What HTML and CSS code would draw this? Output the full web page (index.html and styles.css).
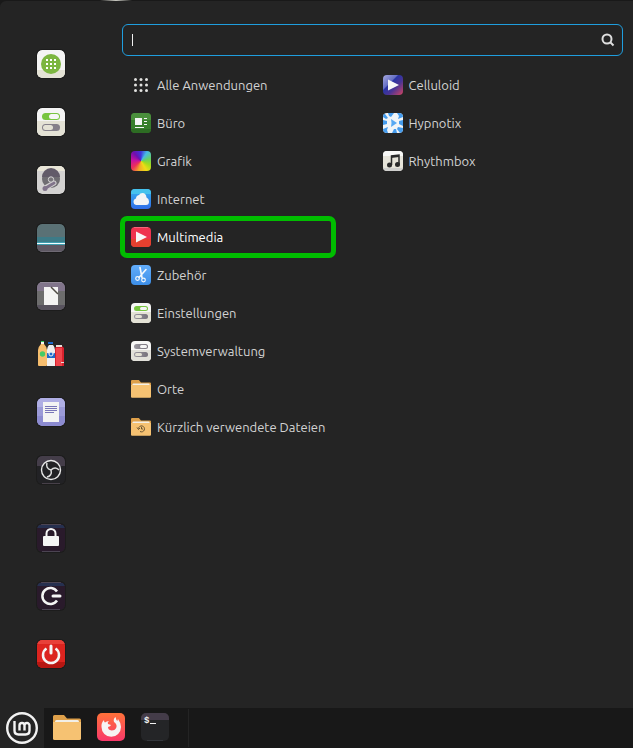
FILE: index.html
```html
<!DOCTYPE html>
<html lang="de">
<head>
<meta charset="utf-8">
<title>Anwendungsmenü</title>
<link rel="stylesheet" href="styles.css">
</head>
<body>
<svg class="defs" aria-hidden="true">
  <defs>
    <linearGradient id="g-fox" x2="0" y2="1"><stop offset="0" stop-color="#ff7139"/><stop offset="1" stop-color="#f9396b"/></linearGradient>
    <linearGradient id="g-cell" x2="1" y2="1"><stop offset="0" stop-color="#a6a9e0"/><stop offset=".35" stop-color="#6670c4"/><stop offset=".4" stop-color="#2a35a4"/><stop offset=".62" stop-color="#4a3495"/><stop offset="1" stop-color="#d34560"/></linearGradient>
    <linearGradient id="g-sky" x2="0" y2="1"><stop offset="0" stop-color="#35b2ee"/><stop offset="1" stop-color="#2f6de8"/></linearGradient>
    <linearGradient id="g-acc" x2="0" y2="1"><stop offset="0" stop-color="#62adfb"/><stop offset="1" stop-color="#3c8ee8"/></linearGradient>
    <linearGradient id="g-knob"><stop offset="0" stop-color="#9b98a0"/><stop offset="1" stop-color="#77727c"/></linearGradient>
    <clipPath id="c-28"><rect width="28" height="28" rx="5"/></clipPath>
    <clipPath id="c-20"><rect width="20" height="20" rx="4"/></clipPath>
    <symbol id="folder" viewBox="0 0 28 26">
      <path d="M0 2.500Q0 1 1.500 1H11l3 3.500h12.500Q28 4.500 28 6v5H0z" fill="#dea04a"/>
      <path d="M2 7.500Q2 6 3.500 6h21Q26 6 26 7.500V10H2z" fill="#f2efe6"/>
      <path d="M0 8h28v16.500q0 1.500-1.500 1.500h-25Q0 26 0 24.500z" fill="#f6c272"/>
    </symbol>
  </defs>
</svg>

<main class="menu">
  <nav class="favorites" aria-label="Favoriten">
    <div class="stack">
      <button class="fav" aria-label="Anwendungsverwaltung"><svg viewBox="0 0 28 28"><g clip-path="url(#c-28)"><path fill="#f4f4f4" d="M0 0h28v28H0z"/><path fill="#e4e2d5" d="M0 20h28v8H0z"/></g><circle cx="14" cy="14" r="10" fill="#7cb640"/><g fill="#fff"><path d="M9 9h2v2H9zm4 0h2v2h-2zm4 0h2v2h-2zM9 13h2v2H9zm4 0h2v2h-2zm4 0h2v2h-2zM9 17h2v2H9zm4 0h2v2h-2zm4 0h2v2h-2z"/></g></svg></button>
      <button class="fav" aria-label="Systemeinstellungen"><svg viewBox="0 0 28 28"><g clip-path="url(#c-28)"><path fill="#f4f4f4" d="M0 0h28v28H0z"/><path fill="#e4e2d5" d="M0 13h28v15H0z"/></g><rect x="5" y="5" width="18" height="7" rx="3.500" fill="#78c540"/><rect x="12" y="6" width="10" height="5" rx="2.500" fill="#f6f6f6"/><rect x="5" y="16" width="18" height="7" rx="3.500" fill="#85808a"/><rect x="6" y="17" width="10" height="5" rx="2.500" fill="#e4e2d5"/></svg></button>
      <button class="fav" aria-label="Laufwerke"><svg viewBox="0 0 28 28"><g clip-path="url(#c-28)"><path fill="#d3d2d1" d="M0 0h28v28H0z"/><path fill="#e9e6d8" d="M0 0h28v5H0z"/></g><circle cx="14" cy="13" r="9" fill="#6f6d72"/><path d="M5 11a9 9 0 0 1 18 0z" fill="#625b69"/><path d="M17 17L9 21.500" stroke="#d3d2d1" stroke-width="5" stroke-linecap="round"/><path d="M17 17L8 22.500" stroke="#81748b" stroke-width="3" stroke-linecap="round"/><circle cx="8" cy="22.500" r="2.500" fill="#81748b"/><circle cx="14" cy="13.500" r="2.700" fill="#77757a" stroke="#d5d3d5"/></svg></button>
      <button class="fav" aria-label="Dokumentenscanner"><svg viewBox="0 0 28 28"><g clip-path="url(#c-28)"><path fill="#5a7175" d="M0 0h28v28H0z"/><path fill="#3d7b87" d="M0 13h28v6H0z"/><path fill="#5e5863" d="M0 20h28v8H0z"/><path fill="#3f9fb0" d="M0 18h28v3H0z"/><path fill="#f3fdff" d="M0 19h28v1H0z"/><path fill="#6f6a74" d="M0 27h28v1H0z"/></g></svg></button>
      <button class="fav" aria-label="LibreOffice"><svg viewBox="0 0 28 28"><g clip-path="url(#c-28)"><path fill="#6d6d6d" d="M0 0h28v28H0z"/><path fill="#81758b" d="M0 0h28v9H0z"/><path fill="#58535e" d="M0 23h28v5H0z"/><path fill="#938b9a" d="M0 0h28v1H0z"/></g><path fill="#f4f4f3" d="M7 5h14v18H7z"/><path d="M14 5l7 7" stroke="#514d46" stroke-width="1.500"/></svg></button>
      <button class="fav" aria-label="Zeichnen"><svg viewBox="0 0 28 28"><path fill="#f6bd6d" d="M1 10Q1 7 4 4h3q3 3 3 6v15q0 1-1 1H2q-1 0-1-1z"/><path fill="#f6f5f0" d="M4 2h3v2H4z"/><path fill="#31c95b" d="M4 1h3v1H4z"/><circle cx="5.500" cy="14" r="2.700" fill="#45cb66"/><path fill="#efeff0" d="M10 10q0-3 2-5h4q2 2 2 5v16h-8z"/><path fill="#1d69cc" d="M11 2h5v2h-5zM10 13l4 1 4-1v5h-8z"/><circle cx="14" cy="14" r="2" fill="#1d69cc" stroke="#f3f3f3"/><path fill="#d8212d" d="M18 8l2-2h5l2 2v18h-9z"/><path fill="#ef454c" d="M19 8h6v18h-6z"/><path fill="#e8ddd9" d="M19 5h6v2h-6zM24 22h3v1h-3z"/></svg></button>
      <button class="fav" aria-label="Texteditor"><svg viewBox="0 0 28 28"><g clip-path="url(#c-28)"><path fill="#9b9ad7" d="M0 0h28v28H0z"/><path fill="#afaee4" d="M0 0h28v9H0z"/><path fill="#8c8bd0" d="M0 18h28v10H0z"/></g><path fill="#f3f3f3" d="M6 4h16v20H6z"/><path d="M8 8.500h12M8 10.500h12M8 12.500h12M8 14.500h9" stroke="#7976b8"/></svg></button>
      <button class="fav" aria-label="OBS Studio"><svg viewBox="0 0 28 28"><g clip-path="url(#c-28)"><path fill="#222225" d="M0 0h28v28H0z"/><path fill="#443d49" d="M0 0h28v10H0z"/><path fill="#474049" d="M5 27h18v1H5z"/></g><circle cx="14" cy="14" r="9.500" fill="#222225" stroke="#e8e8e8" stroke-width="1.400"/><g fill="none" stroke="#dedede" stroke-width="1.500"><path d="M14 14C10 13 9 10 10 7"/><path d="M14 14C10 13 9 10 10 7" transform="rotate(120 14 14)"/><path d="M14 14C10 13 9 10 10 7" transform="rotate(240 14 14)"/></g></svg></button>
    </div>
    <div class="stack">
      <button class="fav" aria-label="Bildschirm sperren"><svg viewBox="0 0 28 28"><g clip-path="url(#c-28)"><path fill="#291a2b" d="M0 0h28v28H0z"/><path fill="#26304f" d="M0 1h28v3H0z"/><path fill="#4b4452" d="M4 0h20v1H4zM5 27h18v1H5z"/></g><path d="M9.500 13V9.500a4.500 4.500 0 0 1 9 0V13" fill="none" stroke="#f5f5f5" stroke-width="2"/><rect x="6" y="12" width="16" height="10" rx="1" fill="#f5f5f5"/></svg></button>
      <button class="fav" aria-label="Abmelden"><svg viewBox="0 0 28 28"><g clip-path="url(#c-28)"><path fill="#291a2b" d="M0 0h28v28H0z"/><path fill="#26304f" d="M0 1h28v3H0z"/><path fill="#4b4452" d="M4 0h20v1H4zM5 27h18v1H5z"/></g><path d="M20 9.500a8 8 0 1 0 0 9" fill="none" stroke="#f5f5f5" stroke-width="2.500"/><path d="M16 14h7" stroke="#f5f5f5" stroke-width="3" stroke-linecap="round"/></svg></button>
      <button class="fav" aria-label="Herunterfahren"><svg viewBox="0 0 28 28"><g clip-path="url(#c-28)"><path fill="#dc241f" d="M0 0h28v28H0z"/><path fill="#e84039" d="M0 0h28v4H0z"/><path fill="#b71712" d="M0 22h28v6H0z"/></g><path d="M9.500 8.500a8 8 0 1 0 9 0" fill="none" stroke="#f5f5f5" stroke-width="2.500"/><path d="M14 6v7" stroke="#f5f5f5" stroke-width="3" stroke-linecap="round"/></svg></button>
    </div>
  </nav>

  <section class="content">
    <form class="search" role="search">
      <input type="search" aria-label="Suchen" autocomplete="off">
      <span class="caret"></span>
      <button type="button" aria-label="Suche starten"><svg viewBox="0 0 14 14"><circle cx="6" cy="6" r="4.500"/><path d="M9.500 9.500l3 3"/></svg></button>
    </form>

    <div class="columns">
      <ul class="list">
        <li><a class="item" href="#"><svg viewBox="0 0 20 20"><g fill="#e2e2e0"><circle cx="4.500" cy="4.500" r="1.500"/><circle cx="10" cy="4.500" r="1.500"/><circle cx="15.500" cy="4.500" r="1.500"/><circle cx="4.500" cy="10" r="1.500"/><circle cx="10" cy="10" r="1.500"/><circle cx="15.500" cy="10" r="1.500"/><circle cx="4.500" cy="15.500" r="1.500"/><circle cx="10" cy="15.500" r="1.500"/><circle cx="15.500" cy="15.500" r="1.500"/></g></svg><span>Alle Anwendungen</span></a></li>
        <li><a class="item" href="#"><svg viewBox="0 0 20 20"><g clip-path="url(#c-20)"><path fill="#377f2b" d="M0 0h20v20H0z"/><path fill="#4a8f3c" d="M0 0h20v7H0z"/><path fill="#2d6c23" d="M0 16h20v4H0z"/></g><path fill="#f5f5f5" d="M4 5h7v7H4zM13 5h3v1h-3zM13 8h3v1h-3zM13 11h3v1h-3zM4 14h9v1H4z"/></svg><span>Büro</span></a></li>
        <li><a class="item" href="#"><i class="spectrum"></i><span>Grafik</span></a></li>
        <li><a class="item" href="#"><svg viewBox="0 0 20 20"><rect width="20" height="20" rx="4" fill="url(#g-sky)"/><path d="M0 5V4q0-4 4-4h12q4 0 4 4v1z" fill="#45c2ed"/><path d="M5 16a3 3 0 0 1-2.500-3Q2.500 10 5 9.500 5 6.500 8 6q1-2 3.500-2Q15 4 15.500 8.500q2.500 1 2.500 4Q18 16 15 16z" fill="#f3f4f5"/></svg><span>Internet</span></a></li>
        <li class="marked"><a class="item active" href="#"><svg viewBox="0 0 20 20"><g clip-path="url(#c-20)"><path fill="#ef334f" d="M0 0h20v20H0z"/><path fill="#e6402f" d="M0 12h20v8H0z"/><path fill="#f6647a" d="M3 0h14v1H3z"/></g><path fill="#f7f7f7" d="M5 4.500L16 10 5 15.500z"/></svg><span>Multimedia</span></a></li>
        <li><a class="item" href="#"><svg viewBox="0 0 20 20"><rect width="20" height="20" rx="4" fill="url(#g-acc)"/><path d="M9 2.500l2 10M15 4.500l-7 8" stroke="#f4f8fc" stroke-width="1.600" stroke-linecap="round"/><g fill="none" stroke="#f4f8fc" stroke-width="1.200"><circle cx="6.500" cy="13.500" r="1.800"/><circle cx="12.500" cy="15" r="1.800"/></g></svg><span>Zubehör</span></a></li>
        <li><a class="item" href="#"><svg viewBox="0 0 20 20"><g clip-path="url(#c-20)"><path fill="#f7f7f6" d="M0 0h20v20H0z"/><path fill="#e4e2d5" d="M0 9h20v11H0z"/></g><rect x="3" y="3" width="14" height="5" rx="2.500" fill="#78c540"/><rect x="9" y="4" width="7" height="3" rx="1.500" fill="#f6f6f6"/><rect x="3" y="11" width="14" height="5" rx="2.500" fill="url(#g-knob)"/><rect x="4" y="12" width="7" height="3" rx="1.500" fill="#e4e2d5"/></svg><span>Einstellungen</span></a></li>
        <li><a class="item" href="#"><svg viewBox="0 0 20 20"><g clip-path="url(#c-20)"><path fill="#f7f7f6" d="M0 0h20v20H0z"/><path fill="#e2e1da" d="M0 9h20v11H0z"/></g><rect x="3" y="3" width="14" height="5" rx="2.500" fill="url(#g-knob)"/><rect x="9" y="4" width="7" height="3" rx="1.500" fill="#f6f6f6"/><rect x="3" y="11" width="14" height="5" rx="2.500" fill="url(#g-knob)"/><rect x="4" y="12" width="7" height="3" rx="1.500" fill="#e4e2d5"/></svg><span>Systemverwaltung</span></a></li>
        <li><a class="item" href="#"><svg viewBox="0 0 20 20"><use href="#folder" width="20" height="19"/></svg><span>Orte</span></a></li>
        <li><a class="item" href="#"><svg viewBox="0 0 20 20"><use href="#folder" width="20" height="19"/><path d="M7.500 11.500A3 3 0 1 1 9 14.500M6 10.500l1.500 2 1.500-1.500M10.500 10v2h1.500" fill="none" stroke="#6b5532"/></svg><span>Kürzlich verwendete Dateien</span></a></li>
      </ul>
      <ul class="list">
        <li><a class="item" href="#"><svg viewBox="0 0 20 20"><rect width="20" height="20" rx="4" fill="url(#g-cell)"/><path fill="#f6f6f8" d="M5 4.500L16 10 5 15.500z"/></svg><span>Celluloid</span></a></li>
        <li><a class="item" href="#"><svg viewBox="0 0 20 20"><g clip-path="url(#c-20)"><path fill="#f0f4f7" d="M0 0h20v20H0z"/><g fill="#459ced"><path d="M5 0h6L8 4 6 3z"/><path d="M14 0h6v4l-5 2 1-3z"/><path d="M20 7v6l-4-2V8z"/><path d="M20 15v5h-3l-3-4 1-2z"/><path d="M14 20H9l2-4h2z"/><path d="M5 20H0v-4l5-2-1 3z"/><path d="M0 12V7l4 1v3z"/><path d="M0 4V0l2 1 3 4-2 1z"/><path d="M8 6l6 4-6 4q1-4 0-8z" fill="#56a8f2"/></g></g></svg><span>Hypnotix</span></a></li>
        <li><a class="item" href="#"><svg viewBox="0 0 20 20"><g clip-path="url(#c-20)"><path fill="#e6e4da" d="M0 0h20v20H0z"/><path fill="#f8f8f7" d="M0 0h20v5H0z"/><path fill="#cfcfcd" d="M0 17h20v3H0z"/></g><path d="M8.500 14V5l7.500-1v9" fill="none" stroke="#29292a" stroke-width="1.500"/><path d="M8 5l8-1v2L8 7z" fill="#29292a"/><circle cx="6.500" cy="14" r="2.500" fill="#29292a"/><circle cx="14.500" cy="13.500" r="2.500" fill="#29292a"/></svg><span>Rhythmbox</span></a></li>
      </ul>
    </div>
  </section>
</main>

<footer class="panel">
  <button class="start" aria-label="Menü"><svg viewBox="0 0 32 32" fill="none" stroke="#f2f2f2"><circle cx="16" cy="16" r="14.800" stroke-width="2.400"/><path d="M8.500 9v9.500q0 4 4 4h7q4 0 4-4v-5a2.500 2.500 0 0 0-5 0v5m0-5a2.500 2.500 0 0 0-5 0v5" stroke-width="2.400"/></svg></button>
  <div class="launchers">
    <button aria-label="Dateien"><svg viewBox="0 0 28 28"><use href="#folder" width="28" height="26" y="1"/></svg></button>
    <button aria-label="Firefox"><svg viewBox="0 0 28 28"><rect width="28" height="28" rx="5" fill="url(#g-fox)"/><path d="M4.500 14Q4 10 7 7q0 2 1 2.500 1.500-1.500 4-1.500-2 1.500-1 3l3 1q-.5 1.500-3 2 0 3 3.500 3.500 4 0 5-3.500.5-3-2.500-5-1-3 1.500-5 .5 3 2 4 0-1 .5-2 3 4 3 8a9.500 9.500 0 0 1-19.500 0z" fill="#f6f5f4"/></svg></button>
    <button aria-label="Terminal"><svg viewBox="0 0 28 28"><g clip-path="url(#c-28)"><path fill="#242527" d="M0 0h28v28H0z"/><path fill="#443c49" d="M0 0h28v7H0z"/><path fill="#33363b" d="M6 27h16v1H6z"/></g><text class="prompt" x="3" y="10">$</text><path d="M9 10.500h6" stroke="#f1f1f1"/></svg></button>
  </div>
</footer>
</body>
</html>
```
FILE: styles.css
```css
* {
  box-sizing: border-box;
}

body {
  margin: 0;
  min-height: 100vh;
  display: flex;
  flex-direction: column;
  background: #191919;
  color: #d3d3d3;
  font: 13px/20px "Ubuntu", "Noto Sans", sans-serif;
}

/* Sliver of the wallpaper above the menu */
body::before {
  content: "";
  position: absolute;
  top: 0;
  left: 100px;
  width: 32px;
  height: 1px;
  background: linear-gradient(90deg, transparent, #c8c8c0 50%, transparent);
}

button {
  display: block;
  padding: 0;
  border: 0;
  background: none;
}

svg {
  display: block;
}

.defs {
  position: absolute;
  width: 0;
  height: 0;
}

.menu {
  flex: 1;
  display: grid;
  grid-template-columns: 102px 1fr;
  gap: 20px;
  margin-top: 1px;
  padding: 24px 10px 40px 0;
  border-radius: 6px 0 0 0;
  background: #242424;
}

/* Favourites column */
.favorites {
  display: flex;
  flex-direction: column;
  align-items: center;
  justify-content: space-between;
  padding-top: 25px;
}

.stack {
  display: flex;
  flex-direction: column;
  gap: 30px;
}

.fav svg {
  width: 28px;
  height: 28px;
  border-radius: 5px;
  box-shadow: 0 0 0 1px #1c1c1c;
}

.fav:nth-child(6) svg {
  box-shadow: none;
}

/* Search */
.search {
  position: relative;
  display: flex;
  align-items: center;
  height: 32px;
  margin-top: -1px;
  padding: 0 7px 0 9px;
  border: 1px solid #1f9ede;
  border-radius: 6px;
}

.search input {
  flex: 1;
  min-width: 0;
  padding: 0;
  border: 0;
  outline: 0;
  background: none;
  color: #f0f0f0;
  font: inherit;
}

.caret {
  position: absolute;
  left: 9px;
  width: 1px;
  height: 12px;
  background: #f0f0f0;
}

.search svg {
  width: 14px;
  height: 14px;
  fill: none;
  stroke: #dedede;
  stroke-width: 2;
}

/* Category and application lists */
.columns {
  display: grid;
  grid-template-columns: 1fr 1fr;
  column-gap: 2px;
  padding-top: 10px;
}

.list {
  margin: 0;
  padding: 0;
  list-style: none;
}

.list li {
  position: relative;
}

.item {
  display: flex;
  align-items: center;
  gap: 6px;
  height: 38px;
  padding: 0 9px;
  color: inherit;
  text-decoration: none;
  white-space: nowrap;
}

.item.active {
  color: #fff;
}

.item svg,
.spectrum {
  flex: none;
  width: 20px;
  height: 20px;
}

.spectrum {
  border-radius: 4px;
  background: conic-gradient(#3f35dc, #48bbe5 35deg, #67cf65 75deg, #a5db1b 115deg, #efdc16 150deg, #f2a52a 195deg, #ed3159 230deg, #c711a0 275deg, #6e0faf 320deg, #3f35dc);
}

.marked::after {
  content: "";
  position: absolute;
  inset: -2px 36px -2px -2px;
  border: 5px solid #00bd00;
  border-radius: 7px;
  pointer-events: none;
}

/* Bottom panel */
.panel {
  display: flex;
  height: 40px;
  background: #181818;
}

.start {
  display: grid;
  place-items: center;
  width: 44px;
  background: #242424;
}

.start svg {
  width: 32px;
  height: 32px;
}

.launchers {
  display: flex;
  align-items: flex-start;
  gap: 16px;
  margin: 1px 0;
  padding: 4px 19px 0 9px;
  border-right: 1px solid #242424;
}

.launchers svg {
  width: 28px;
  height: 28px;
}

.prompt {
  fill: #f1f1f1;
  font: bold 9px "Liberation Mono", monospace;
}
```
